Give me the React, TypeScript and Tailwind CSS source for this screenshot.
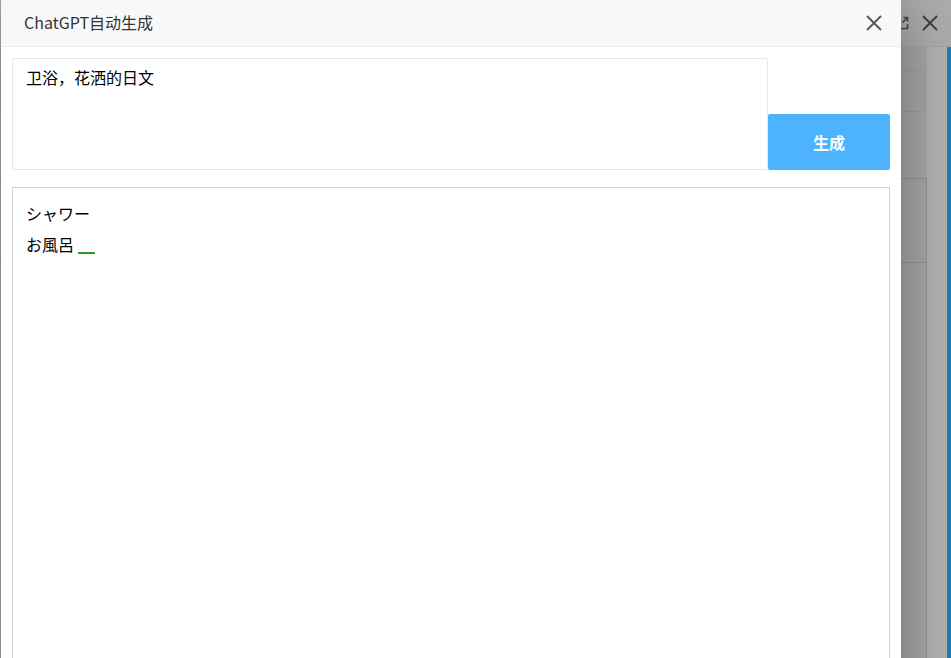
export default function App() {
  return (
    <div className="relative w-[951px] h-[658px] overflow-hidden bg-[#a6a6a6] font-['Noto_Sans_CJK_SC',sans-serif]">
      {/* page behind the modal (dimmed) */}
      <div className="absolute inset-0 flex flex-col">
        <div className="h-[47px] shrink-0 flex items-center justify-end gap-[13px] pr-[13px] bg-[#ababab] border-b border-[#a2a2a2]">
          <svg width="14" height="14" viewBox="0 0 14 14" fill="none" stroke="#444" strokeWidth="1.6">
            <path d="M6 1.5H1.5v11h11V8" />
            <path d="M7.5 6.5 12.5 1.5M8.5 1.5h4v4" />
          </svg>
          <svg width="16" height="16" viewBox="0 0 16 16" fill="none" stroke="#3f3f3f" strokeWidth="1.8">
            <path d="M1 1 15 15M15 1 1 15" />
          </svg>
        </div>
        <div className="flex-1 flex">
          <div className="flex-1 flex flex-col pt-[23px] bg-[#a3a3a3]">
            <div className="h-[42px] mr-[2px] border border-[#9a9a9a] rounded-[3px]" />
            <div className="mt-[66px] flex-1 flex flex-col border-t border-r border-[#8f8f8f]">
              <div className="h-[84px] border-b border-[#8f8f8f]" />
            </div>
          </div>
          <div className="w-[20px] bg-[#afafaf]" />
          <div className="w-[4px] bg-[#1c80b2]" />
        </div>
      </div>

      {/* modal dialog */}
      <div className="absolute left-[1px] top-0 w-[900px] h-[720px] flex flex-col bg-white shadow-[1px_1px_50px_rgba(0,0,0,0.3)]">
        <div className="h-[47px] shrink-0 flex items-center justify-between pl-[23px] pr-[19px] bg-[#f8f8f8] border-b border-[#eeeeee]">
          <span className="text-[16px] text-[#333333] leading-none -mt-[2px]">ChatGPT自动生成</span>
          <svg width="16" height="16" viewBox="0 0 16 16" fill="none" stroke="#555555" strokeWidth="1.8">
            <path d="M1 1 15 15M15 1 1 15" />
          </svg>
        </div>
        <div className="flex-1 flex flex-col px-[11px] pt-[11px]">
          <div className="flex items-end">
            <div className="w-[756px] h-[112px] border border-[#e6e6e6] rounded-[2px] px-[13px] pt-[7px] text-[16px] leading-[22px] text-black">
              卫浴，花洒的日文
            </div>
            <button className="w-[122px] h-[56px] rounded-[2px] bg-[#4db3ff] text-white text-[16px] font-bold">
              生成
            </button>
          </div>
          <div className="mt-[17px] flex-1 border border-[#d2d2d2] px-[13px] pt-[10px] text-[16px] leading-[31px] text-black font-['Noto_Sans_CJK_JP',sans-serif]">
            <div>シャワー</div>
            <div>
              お風呂
              <span className="inline-block w-[17px] h-[2px] ml-[4px] bg-[#2a9a2a] align-[-3px]" />
            </div>
          </div>
        </div>
      </div>
    </div>
  );
}
